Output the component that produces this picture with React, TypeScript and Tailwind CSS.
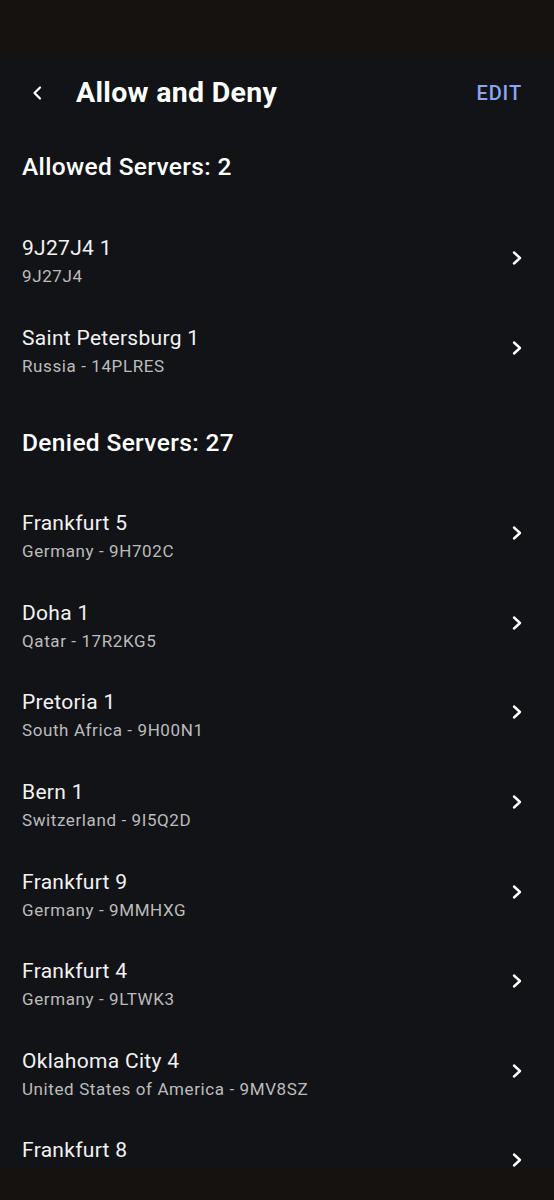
const allowed = [
  { name: "9J27J4 1", sub: "9J27J4" },
  { name: "Saint Petersburg 1", sub: "Russia - 14PLRES" },
];

const denied = [
  { name: "Frankfurt 5", sub: "Germany - 9H702C" },
  { name: "Doha 1", sub: "Qatar - 17R2KG5" },
  { name: "Pretoria 1", sub: "South Africa - 9H00N1" },
  { name: "Bern 1", sub: "Switzerland - 9I5Q2D" },
  { name: "Frankfurt 9", sub: "Germany - 9MMHXG" },
  { name: "Frankfurt 4", sub: "Germany - 9LTWK3" },
  { name: "Oklahoma City 4", sub: "United States of America - 9MV8SZ" },
  { name: "Frankfurt 8", sub: "Germany - 9L2PQ7" },
];

const Chevron = () => (
  <svg width="14" height="16" viewBox="0 0 14 16" fill="none">
    <path d="M4 2.5 L10 8 L4 13.5" stroke="white" strokeWidth="2.4" strokeLinecap="round" strokeLinejoin="round" />
  </svg>
);

const ServerRow = ({ name, sub, h }: { name: string; sub: string; h: string }) => (
  <div className={`flex items-center justify-between pl-[22px] pr-[30px] pt-[1px] ${h}`}>
    <div className="flex flex-col gap-[6px]">
      <span className="text-[21px] leading-[24px] tracking-[0.3px] text-[#f2f2f2]">{name}</span>
      <span className="text-[17px] leading-[20px] tracking-[0.6px] text-[#bcbcbc]">{sub}</span>
    </div>
    <div className="-mt-[6px]">
      <Chevron />
    </div>
  </div>
);

export default function App() {
  return (
    <div className="relative h-[1200px] w-[554px] overflow-hidden bg-[#121316] font-['Roboto',sans-serif]">
      <div className="h-[54px] bg-[#161210]" />

      <div className="flex h-[65px] items-start justify-between pl-[30px] pr-[32px] pt-[13px]">
        <div className="flex h-[52px] items-center">
          <svg width="14" height="18" viewBox="0 0 14 18" fill="none">
            <path d="M10 3.5 L4.5 9 L10 14.5" stroke="white" strokeWidth="2.2" strokeLinecap="round" strokeLinejoin="round" />
          </svg>
          <h1 className="ml-[32px] text-[28.5px] font-bold tracking-[0.3px] text-white">Allow and Deny</h1>
        </div>
        <div className="flex h-[52px] items-center">
          <span className="text-[20px] font-medium tracking-[0.9px] text-[#8ba5f3]">EDIT</span>
        </div>
      </div>

      <div className="flex h-[96px] items-center pl-[22px]">
        <h2 className="text-[24.5px] font-medium tracking-[0.35px] text-white">Allowed Servers: 2</h2>
      </div>
      {allowed.map((s) => (
        <ServerRow key={s.name} name={s.name} sub={s.sub} h="h-[90px]" />
      ))}

      <div className="flex h-[96px] items-center pl-[22px]">
        <h2 className="text-[24.5px] font-medium tracking-[0.35px] text-white">Denied Servers: 27</h2>
      </div>
      {denied.map((s) => (
        <ServerRow key={s.name} name={s.name} sub={s.sub} h="h-[89.6px]" />
      ))}

      <div className="absolute bottom-0 left-0 h-[32px] w-full bg-[#161210]" />
    </div>
  );
}
